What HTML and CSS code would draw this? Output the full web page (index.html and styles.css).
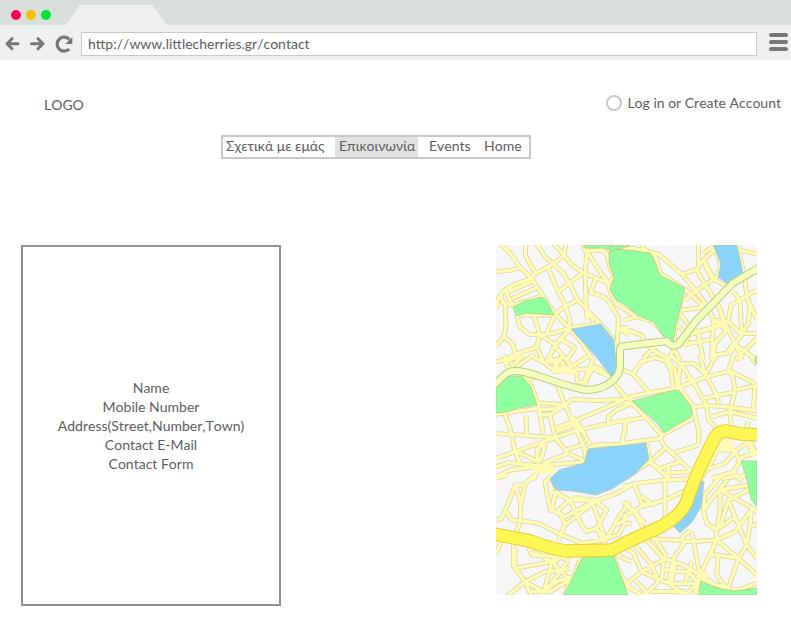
FILE: index.html
```html
<!DOCTYPE html>
<html lang="el">
<head>
<meta charset="utf-8">
<title>Contact</title>
<link rel="stylesheet" href="styles.css">
</head>
<body>
<header class="browser">
  <div class="tabbar">
    <span class="dot red"></span><span class="dot yellow"></span><span class="dot green"></span>
    <span class="tab"></span>
  </div>
  <div class="toolbar">
    <svg class="nav-icons" width="81" height="35" viewBox="0 0 81 35" fill="none" stroke="#777" stroke-width="3" stroke-linecap="round" stroke-linejoin="round">
      <path d="M18 18.700H7M12 13.700L7 18.700L12 23.700M31.500 18.700H43M38 13.700L43 18.700L38 23.700"/>
      <path d="M69.400 14.500A7 7 0 1 0 69.200 24" stroke-linecap="butt" stroke-width="3.200"/>
      <path d="M72.300 12V19H65.300Z" fill="#777" stroke="none"/>
    </svg>
    <div class="address">http://www.littlecherries.gr/contact</div>
    <div class="menu"><span></span><span></span><span></span></div>
  </div>
</header>
<main>
  <div class="top">
    <div class="logo">LOGO</div>
    <div class="login"><span class="ring"></span><span>Log in or Create Account</span></div>
  </div>
  <nav>
    <a class="about">Σχετικά με εμάς</a><a class="active">Επικοινωνία</a><a class="events">Events</a><a class="home">Home</a>
  </nav>
  <div class="content">
    <section class="details">
      <p>Name</p><p>Mobile Number</p><p>Address(Street,Number,Town)</p><p>Contact E-Mail</p><p>Contact Form</p>
    </section>
    <svg class="map" width="261" height="350" viewBox="496 245 261 350">
      <defs>
        <g id="roads">
          <path transform="translate(490 240) scale(.33333)" d="M32 10L65 45L90 82L125 115L160 170L195 222M18 95L65 90L90 85M108 10L106 45L122 75L138 100M138 10L165 50L190 72L220 100L238 130L262 178L290 210L330 250L370 295M190 72L138 100L115 118L70 135L38 155L24 180L18 210M190 72L222 45L228 10M190 10L222 45L245 75L280 98M275 10L290 40L286 98L288 190L292 240M290 33L335 30L350 40L358 75L372 110L355 130L362 160L382 195L420 216M292 35L320 80L355 130M280 98L310 110L355 130M318 112L302 157L345 172L362 195L385 232L385 265L415 262M280 98L238 130L205 155M175 85L205 155L225 195L240 240L238 262M262 180L225 200L195 222M55 155L128 124M65 176L140 143M45 150L62 185L75 200M155 168L68 196L40 190L30 160M45 190L48 260L42 290L18 318M42 290L70 315L78 360M75 225L120 225L195 225M80 225L90 260L115 282L150 285L190 280L240 264L330 250M130 225L150 285L140 320L160 365M195 222L170 280M195 222L235 262L270 300L305 355M150 285L190 310L228 360M238 270L208 300L190 325L170 365M68 345L140 322M70 345L40 365M215 300L260 325M230 360L255 325M330 250L365 290L378 320M290 215L310 240M385 235L382 310M280 10L350 15L420 27M384 265L420 285"/>
          <path transform="translate(625 240) scale(.33333)" d="M-5 20L50 30L90 45L105 100L180 147L235 200M50 15L62 32L100 42L170 102L215 155L245 197M170 102L215 88L235 125L275 190L300 250L335 320L350 360M180 147L160 210L150 270L147 310M220 10L220 75L270 28M235 40L270 15M215 88L235 60L270 120L315 145M270 28L288 75L275 112L210 155L180 180M240 75L260 115M240 132L285 205L305 265M340 10L348 65L360 115L365 165L375 200L370 250L350 280M340 30L396 42M325 155L345 180L350 280L315 340M345 180L396 150M345 180L318 195L310 245L265 240L260 360M365 170L396 240M250 200L265 240M170 210L235 202M165 220L190 255L218 275L235 360M150 250L190 285L180 320M155 318L260 298M190 285L260 265L305 248M218 275L265 262M265 240L305 270L270 310L265 345L305 340L325 310L396 360M350 280L396 280M310 245L350 285L325 320M396 295L340 350M-5 205L35 230L85 245L125 290L145 310M-5 240L40 230M-5 265L50 285L65 315L100 340L130 355M90 320L55 355M145 325L165 360M145 330L130 360"/>
          <path transform="translate(490 355) scale(.33333)" d="M18 20L45 15L55 45M40 0L50 20L90 0M55 45L100 0M80 35L130 0M120 0L165 25L195 50L310 40L345 60M165 25L210 10L225 40M175 0L210 45L245 35L300 0M190 40L220 0M225 10L245 35M260 35L262 80L285 85L310 35L330 40L360 70L410 130M310 10L295 50L280 85M130 65L100 65L125 95L145 150L160 235M130 65L110 80M200 85L225 150L255 215L280 270L290 320M145 143L225 150L245 133L330 137L425 130M145 165L200 160L225 150M18 178L145 160M45 178L60 220L75 290L90 325M108 180L110 238M18 236L60 238L195 248M145 178L180 180L195 248M180 180L225 150M195 220L260 195L320 170L400 135M355 205L355 185L380 165L425 145M195 248L255 228L320 213L425 192M260 195L300 270M250 185L270 225M18 310L75 290L195 248M410 195L395 265M18 335L55 323L150 333L200 328L290 320L290 285L315 270L425 268M195 248L235 295L290 320M235 295L160 325M250 210L200 230M225 285L275 270M160 265L140 285L145 325M165 265L158 300L145 325M18 365L60 345L150 333L130 375M150 333L190 350M80 290L145 320"/>
          <path transform="translate(625 355) scale(.33333)" d="M-5 45L25 58L70 110M25 55L50 20L90 8L125 20L138 50L145 100M120 0L150 45L158 105M-5 130L75 113L160 98L245 65L315 48L390 85M135 0L165 25L205 25L240 55L275 120M165 30L160 98M170 30L210 90L245 150M180 75L205 72M225 0L240 60L275 0M310 45L325 70L330 110L315 165L318 205M310 50L325 0M375 0L396 30M330 15L355 0M335 105L396 90M235 130L335 110M165 100L205 155L222 230L220 270M205 155L245 152L300 155L396 168M245 152L250 195L270 215M260 185L315 170L396 190M275 115L280 145M390 90L385 165M370 200L365 220M-5 145L20 140M18 142L62 187L110 240L205 190M62 187L0 198L0 240M-5 265L105 250L120 275L195 345M110 240L105 255M120 280L75 320L0 370M65 265L75 320L130 370M150 292L220 270M75 325L105 340L165 320M120 355L195 350M130 335L130 375M265 260L240 340M290 260L260 320L230 370M280 275L330 290L370 260L385 305M330 290L345 320L325 350L260 370M330 290L300 325L240 345M265 285L330 285M345 310L396 290M325 350L345 375L365 350M375 260L396 300"/>
          <path transform="translate(490 475) scale(.33333)" d="M18 10L50 0M135 0L100 30L75 30L55 85L35 130L18 135M75 30L92 80L92 135L70 200L70 270L105 320L125 365M105 30L95 80M50 110L65 135L92 137L145 145L205 175L275 205L340 195M185 5L165 20L180 105L205 115L225 125L310 80L380 55L425 30M185 10L205 55L240 75L275 150L290 170L320 160L345 205M185 50L240 75L200 110M195 55L185 110M240 75L315 75L350 105L320 160M250 68L285 70M315 80L225 150L205 195M310 90L345 190M205 110L225 145M420 80L390 120L345 200M345 190L385 180L405 145L425 145M380 150L410 130M18 235L35 195M115 215L125 240L200 245L240 255M75 220L75 280L185 260L200 240M130 230L185 260L160 360M75 280L105 320L165 290L215 285L235 255M185 260L240 315L225 360M190 265L220 240M105 320L50 365M105 320L160 350L200 320L250 305L270 255M120 350L180 350L240 315M215 285L165 350M185 290L240 280M375 245L380 275L400 310L425 345M390 245L425 260"/>
          <path transform="translate(625 475) scale(.33333)" d="M-5 35L35 25L120 15L190 12M30 30L50 85L90 90M-5 125L50 95L120 75L185 45M120 10L120 130M-5 80L30 115L55 160M20 100L60 145M50 65L85 90M60 190L150 195L200 200L275 195L330 170L375 110M60 190L115 250L175 270L225 300L260 325L310 340M85 185L125 245M30 210L80 270L100 320M-5 215L25 235L50 290L0 330M50 290L115 255L110 320M50 290L130 325L220 325M180 200L145 250L130 325M200 170L225 300M225 300L275 195L275 165L245 145L235 105L285 40L320 0M290 0L240 60L235 110M285 45L285 110L275 165M285 45L330 70L380 98M285 45L375 30M290 10L375 0M285 160L310 75L380 40M310 75L330 125L365 210L396 250M340 250L365 210M330 125L275 165M380 98L375 150L365 210M375 150L396 150M275 195L255 240L280 240L275 300L305 340M280 240L340 250L310 340M340 250L396 300M275 195L340 250M260 320L225 300L210 360M165 195L195 165M150 265L140 325M200 260L180 325M140 290L190 290L220 325M115 285L145 285M0 330L50 360M100 320L60 360M35 320L70 360M130 325L180 360L220 325M240 325L270 345L340 345L396 325M80 350L180 350M380 98L396 110"/>
        </g>
      </defs>
      <rect x="496" y="245" width="261" height="350" fill="#f7f7f7"/>
      <use href="#roads" class="road-edge"/>
      <use href="#roads" class="road-fill"/>
      <g class="junctions">
        <path d="M552 369L566 366L577 371L572 376L559 372ZM531 465L549 463L557 469L552 475L534 472ZM718 441L733 437L733 448L722 452ZM700 571L710 574L705 582L696 577ZM604 582L614 583L610 594L603 594Z"/>
      </g>
      <g class="parks">
        <path d="M583 245L630 246L612 251L604 248L584 248ZM610 245L617 249L650 253L656 264L660 275L685 288L676 325L673 343L664 337L654 322L638 316L627 306L616 300L610 290L614 278L609 263Z"/>
        <path d="M513 307L525 301L542 297L547 301L554 315L527 313L516 316Z"/>
        <path d="M496 384L507 376L522 376L531 387L537 405L518 408L507 412L496 413Z"/>
        <path d="M632 401L675 390L679 391L691 406L692 416L664 433L658 424Z"/>
        <path d="M741 461H757V507L751 499L747 480Z"/>
        <path d="M582 558L614 556L628 595H564Z"/>
        <path d="M701 581L716 588L735 591L757 588V595H699ZM757 355L754 360L757 365Z"/>
      </g>
      <g class="waters">
        <path d="M571 329L601 324L614 340L617 375L611 376L597 358Z"/>
        <path d="M713 245H737L743 273L731 286L718 277L721 264Z"/>
        <path d="M550 479L559 470L584 463L588 449L646 443L649 459L635 474L612 489L596 495L572 491L556 490Z"/>
        <path d="M701 480L704 482L701 507L692 522L680 533L673 526L688 511L698 491Z"/>
      </g>
      <path class="main-edge" d="M494 385C503 377 507 371 514 371C530 370 554 384 586 390C606 390 620 378 620 366V350Q620 346 625 346L667 341Q673 350 680 342L696 321L733 283L760 267"/>
      <path class="main-fill" d="M494 385C503 377 507 371 514 371C530 370 554 384 586 390C606 390 620 378 620 366V350Q620 346 625 346L667 341Q673 350 680 342L696 321L733 283L760 267"/>
      <path class="highway-edge" d="M494 534L530 541Q558 551 569 551L612 550L627 542L660 527Q683 515 688 498Q695 476 713 441Q718 430 727 431L740 434L760 435"/>
      <path class="highway-fill" d="M494 534L530 541Q558 551 569 551L612 550L627 542L660 527Q683 515 688 498Q695 476 713 441Q718 430 727 431L740 434L760 435"/>
    </svg>
  </div>
</main>
</body>
</html>
```
FILE: styles.css
```css
* { box-sizing: border-box; }
body { margin: 0; background: #fff; color: #5e5e5e; font: 14px/19px Lato, "Liberation Sans", sans-serif; font-kerning: none; overflow: hidden; }
.tabbar { height: 25px; background: #d9dfdb; display: flex; align-items: center; padding-left: 11px; gap: 5px; }
.dot { width: 10px; height: 10px; border-radius: 50%; margin-top: 4px; }
.red { background: #ff0054; }
.yellow { background: #f2c200; }
.green { background: #00e33b; }
.tab { align-self: flex-end; width: 101px; height: 20px; margin-left: 10px; background: #eff1f0; clip-path: polygon(14px 0, 86px 0, 100% 100%, 0 100%); }
.toolbar { height: 35px; background: #eff1f0; display: flex; align-items: flex-start; }
.nav-icons { display: block; flex: none; }
.address { width: 676px; height: 24px; margin-top: 7px; background: #fff; border: 1px solid #c8c8c8; padding: 1px 6px; }
.menu { margin: 8px 0 0 12px; width: 19px; display: flex; flex-direction: column; gap: 3px; }
.menu span { height: 4px; border-radius: 2px; background: #777; }
main { height: 576px; padding-top: 33px; }
.top { display: flex; justify-content: space-between; padding: 0 10px 0 44px; height: 42px; }
.logo { margin-top: 2px; }
.login { display: flex; gap: 5px; }
.ring { width: 16px; height: 16px; border: 2px solid #c8c8c8; border-radius: 50%; margin-top: 2px; }
nav { width: 310px; height: 24px; margin-left: 221px; border: 2px solid #c8c8c8; display: flex; }
nav a { padding-left: 3px; line-height: 18px; white-space: nowrap; }
.about { width: 112px; }
.active { width: 83px; padding-left: 4px; background: #e2e2e2; }
.events { width: 66px; padding-left: 11px; }
.home { padding-left: 0; }
.content { display: flex; justify-content: space-between; padding: 86px 34px 0 21px; }
.details { width: 260px; height: 361px; border: 2px solid #919191; display: flex; flex-direction: column; justify-content: center; text-align: center; }
.details p { margin: 0; }
.map { display: block; }
.map path { stroke-linejoin: round; }
.road-edge { fill: none; stroke: #d8d5a5; stroke-width: 14.5px; }
.road-fill { fill: none; stroke: #fffab4; stroke-width: 10px; }
.junctions { fill: #fffab4; }
.parks { fill: #90ffa0; stroke: #c0c17e; stroke-width: .7px; }
.waters { fill: #8bd3fa; stroke: #b6c6a5; stroke-width: .7px; }
.main-edge { fill: none; stroke: #bdcb80; stroke-width: 8px; }
.main-fill { fill: none; stroke: #f3ffbd; stroke-width: 6px; }
.highway-edge { fill: none; stroke: #e7cc32; stroke-width: 13.5px; }
.highway-fill { fill: none; stroke: #fdf654; stroke-width: 11.5px; }
```
